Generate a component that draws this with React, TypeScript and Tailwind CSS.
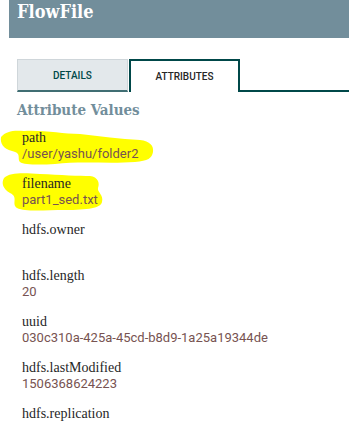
import React from 'react';

const slab = {
  fontFamily: '"DejaVu Serif Condensed", "DejaVu Serif", "Liberation Serif", serif',
  fontStretch: 'condensed' as const,
};
const roboto = { fontFamily: 'Roboto, "Liberation Sans", sans-serif' };

interface Attr {
  name: string;
  value: string;
}

const ATTRS: Attr[] = [
  { name: 'path', value: '/user/yashu/folder2' },
  { name: 'filename', value: 'part1_sed.txt' },
  { name: 'hdfs.owner', value: '' },
  { name: 'hdfs.length', value: '20' },
  { name: 'uuid', value: '030c310a-425a-45cd-b8d9-1a25a19344de' },
  { name: 'hdfs.lastModified', value: '1506368624223' },
  { name: 'hdfs.replication', value: '' },
];

// marker scribbles drawn over the screenshot
function Highlights() {
  return (
    <svg className="pointer-events-none absolute left-0 top-0" width="349" height="442">
      <path
        d="M1 137 C6 131 14 130 24 131 C45 130 62 134 80 134 C100 136 120 139 140 140 C150 141 154 146 153 152 C152 158 148 161 135 162 C110 164 80 161 55 164 C40 165 24 165 20 162 C17 158 22 153 12 151 C3 149 0 143 1 137 Z"
        fill="#ffff00"
      />
      <path
        d="M4 178 C10 172 25 173 40 174 C60 175 80 176 90 176 C98 177 100 183 98 188 C97 192 104 195 102 202 C101 208 88 210 65 210 C45 210 25 212 17 208 C11 204 19 197 10 193 C3 189 1 183 4 178 Z"
        fill="#ffff00"
      />
    </svg>
  );
}

export default function App() {
  return (
    <div className="relative h-[442px] w-[349px] overflow-hidden bg-white">
      <Highlights />
      <div className="ml-[9px] h-[38px] bg-[#728e9b] pl-2 pt-[1px]">
        <h1 className="text-[18px] font-bold leading-[22px] text-white" style={slab}>
          FlowFile
        </h1>
      </div>

      <div className="mt-[21px] flex pl-[17px]">
        <div
          className="flex h-[33px] w-[111px] items-center justify-center border border-b-2 border-[#cfd6da] border-b-[#406e73] bg-[#e3e8eb] text-[10px] font-medium text-[#004849]"
          style={roboto}
        >
          DETAILS
        </div>
        <div
          className="ml-[1px] flex h-[33px] w-[111px] items-center justify-center border-2 border-b-0 border-[#004849] bg-white text-[10px] font-medium text-[#262626]"
          style={roboto}
        >
          ATTRIBUTES
        </div>
        <div className="h-[33px] flex-1 border-b-2 border-[#004849]" />
      </div>

      <h2 className="mt-[8px] pl-[17px] text-[15px] font-bold leading-[20px] text-[#728e9b]" style={slab}>
        Attribute Values
      </h2>

      <div className="relative mt-[10px] flex flex-col gap-[14px] pl-[22px]">
        {ATTRS.map((a) => (
          <div key={a.name} className="flex flex-col">
            <div
              className="text-[14px] leading-[16px] text-[#262626]"
              style={{ fontFamily: '"Liberation Serif", serif' }}
            >
              {a.name}
            </div>
            <div className="h-[16px] text-[13px] leading-[16px] text-[#775351]" style={roboto}>
              {a.value}
            </div>
          </div>
        ))}
      </div>
    </div>
  );
}
